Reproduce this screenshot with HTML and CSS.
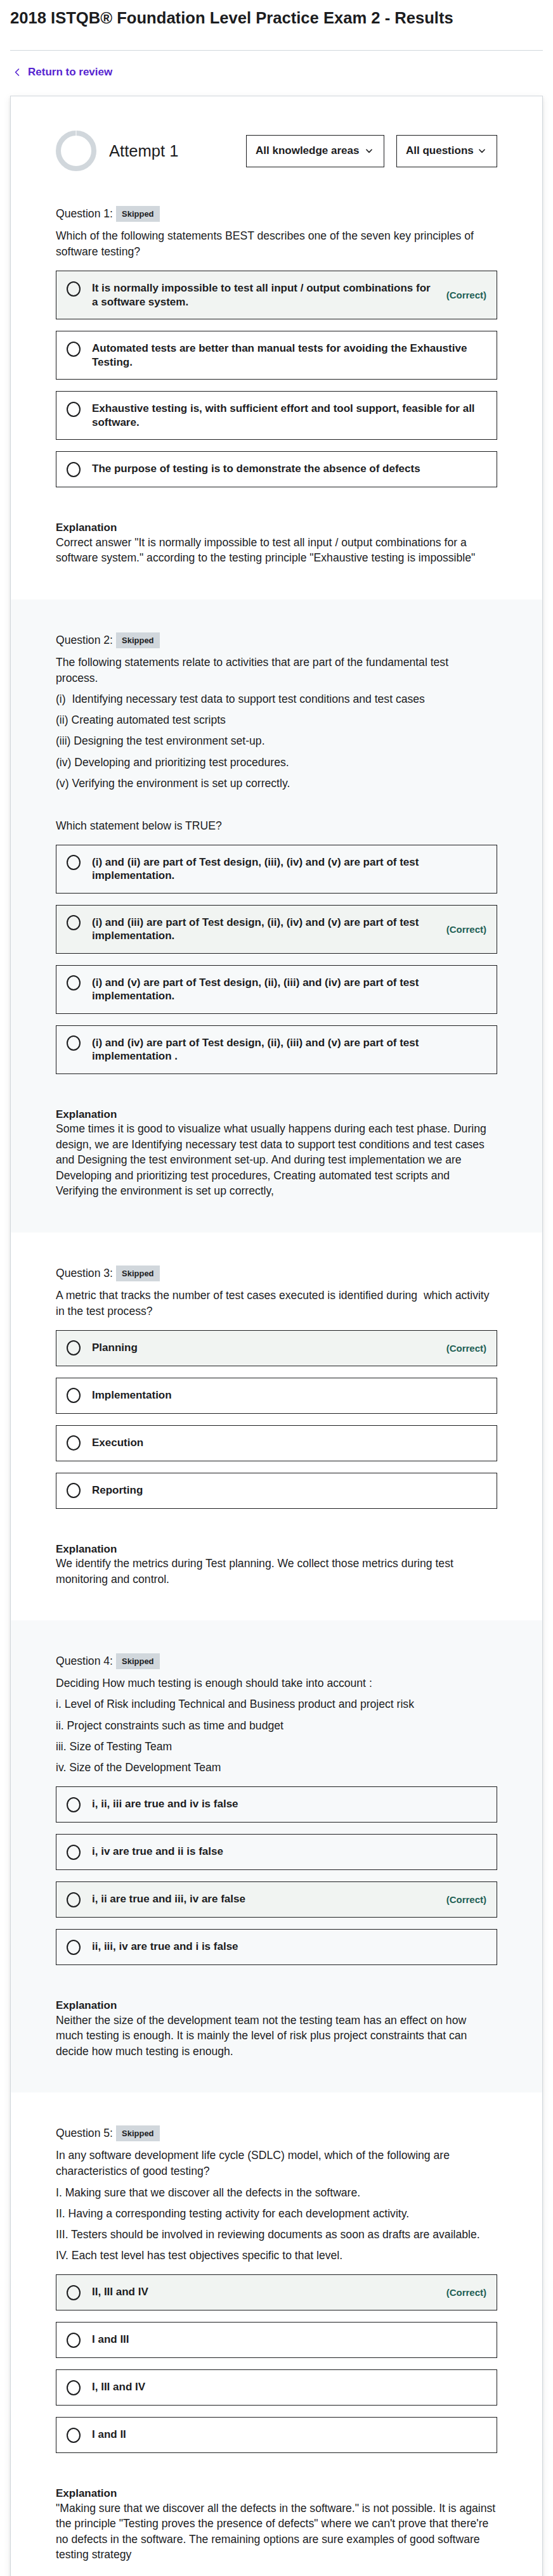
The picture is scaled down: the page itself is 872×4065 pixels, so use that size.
FILE: index.html
```html
<!DOCTYPE html>
<html lang="en">
<head>
<meta charset="utf-8">
<title>2018 ISTQB® Foundation Level Practice Exam 2 - Results</title>
<link rel="stylesheet" href="styles.css">
</head>
<body>
<div class="page">
  <h1 class="title">2018 ISTQB® Foundation Level Practice Exam 2 - Results</h1>
  <hr class="rule">
  <a class="back" href="#">
    <svg class="back-icon" width="10" height="12" viewBox="0 0 10 12"><path d="M7.5 1 L2.5 6 L7.5 11" fill="none" stroke="#5624d0" stroke-width="1.6" stroke-linecap="round" stroke-linejoin="round"/></svg>
    <span>Return to review</span>
  </a>

  <div class="card">
    <div class="attempt">
      <svg class="donut" width="64" height="64" viewBox="0 0 64 64">
        <circle cx="32" cy="32" r="28" fill="none" stroke="#d1d7dc" stroke-width="8"/>
        <rect x="31" y="0" width="2" height="8" fill="#e8ebee"/>
      </svg>
      <div class="attempt-label">Attempt 1</div>
      <div class="filters">
        <button class="filter filter-wide" type="button"><span>All knowledge areas</span><svg class="chev" width="10" height="7" viewBox="0 0 10 7"><path d="M1 1.2 L5 5.4 L9 1.2" fill="none" stroke="#1c1d1f" stroke-width="1.6" stroke-linecap="round" stroke-linejoin="round"/></svg></button>
        <button class="filter filter-narrow" type="button"><span>All questions</span><svg class="chev" width="10" height="7" viewBox="0 0 10 7"><path d="M1 1.2 L5 5.4 L9 1.2" fill="none" stroke="#1c1d1f" stroke-width="1.6" stroke-linecap="round" stroke-linejoin="round"/></svg></button>
      </div>
    </div>

    <!-- Question 1 -->
    <section class="q">
      <div class="q-label">Question 1:<span class="badge">Skipped</span></div>
      <div class="q-text">
        <p>Which of the following statements BEST describes one of the seven key principles of software testing?</p>
      </div>
      <div class="options">
        <div class="option correct"><span class="radio"></span><span class="opt-text">It is normally impossible to test all input / output combinations for a software system.</span><span class="tag">(Correct)</span></div>
        <div class="option"><span class="radio"></span><span class="opt-text">Automated tests are better than manual tests for avoiding the Exhaustive Testing.</span></div>
        <div class="option"><span class="radio"></span><span class="opt-text">Exhaustive testing is, with sufficient effort and tool support, feasible for all software.</span></div>
        <div class="option"><span class="radio"></span><span class="opt-text">The purpose of testing is to demonstrate the absence of defects</span></div>
      </div>
      <div class="expl">
        <h3 class="expl-title">Explanation</h3>
        <p class="expl-text">Correct answer "It is normally impossible to test all input / output combinations for a software system." according to the testing principle "Exhaustive testing is impossible"</p>
      </div>
    </section>

    <!-- Question 2 -->
    <section class="q alt">
      <div class="q-label">Question 2:<span class="badge">Skipped</span></div>
      <div class="q-text">
        <p>The following statements relate to activities that are part of the fundamental test<br>process.</p>
        <p>(i)&nbsp; Identifying necessary test data to support test conditions and test cases</p>
        <p>(ii) Creating automated test scripts</p>
        <p>(iii) Designing the test environment set-up.</p>
        <p>(iv) Developing and prioritizing test procedures.</p>
        <p>(v) Verifying the environment is set up correctly.</p>
        <p><br></p>
        <p>Which statement below is TRUE?</p>
      </div>
      <div class="options">
        <div class="option"><span class="radio"></span><span class="opt-text">(i) and (ii) are part of Test design, (iii), (iv) and (v) are part of test implementation.</span></div>
        <div class="option correct"><span class="radio"></span><span class="opt-text">(i) and (iii) are part of Test design, (ii), (iv) and (v) are part of test implementation.</span><span class="tag">(Correct)</span></div>
        <div class="option"><span class="radio"></span><span class="opt-text">(i) and (v) are part of Test design, (ii), (iii) and (iv) are part of test implementation.</span></div>
        <div class="option"><span class="radio"></span><span class="opt-text">(i) and (iv) are part of Test design, (ii), (iii) and (v) are part of test implementation .</span></div>
      </div>
      <div class="expl">
        <h3 class="expl-title">Explanation</h3>
        <p class="expl-text">Some times it is good to visualize what usually happens during each test phase. During design, we are Identifying necessary test data to support test conditions and test cases and Designing the test environment set-up. And during test implementation we are Developing and prioritizing test procedures, Creating automated test scripts and<br>Verifying the environment is set up correctly,</p>
      </div>
    </section>

    <!-- Question 3 -->
    <section class="q">
      <div class="q-label">Question 3:<span class="badge">Skipped</span></div>
      <div class="q-text">
        <p>A metric that tracks the number of test cases executed is identified during&nbsp; which activity in the test process?</p>
      </div>
      <div class="options">
        <div class="option correct"><span class="radio"></span><span class="opt-text">Planning</span><span class="tag">(Correct)</span></div>
        <div class="option"><span class="radio"></span><span class="opt-text">Implementation</span></div>
        <div class="option"><span class="radio"></span><span class="opt-text">Execution</span></div>
        <div class="option"><span class="radio"></span><span class="opt-text">Reporting</span></div>
      </div>
      <div class="expl">
        <h3 class="expl-title">Explanation</h3>
        <p class="expl-text">We identify the metrics during Test planning. We collect those metrics during test monitoring and control.</p>
      </div>
    </section>

    <!-- Question 4 -->
    <section class="q alt">
      <div class="q-label">Question 4:<span class="badge">Skipped</span></div>
      <div class="q-text">
        <p>Deciding How much testing is enough should take into account :</p>
        <p>i. Level of Risk including Technical and Business product and project risk</p>
        <p>ii. Project constraints such as time and budget</p>
        <p>iii. Size of Testing Team</p>
        <p>iv. Size of the Development Team</p>
      </div>
      <div class="options">
        <div class="option"><span class="radio"></span><span class="opt-text">i, ii, iii are true and iv is false</span></div>
        <div class="option"><span class="radio"></span><span class="opt-text">i, iv are true and ii is false</span></div>
        <div class="option correct"><span class="radio"></span><span class="opt-text">i, ii are true and iii, iv are false</span><span class="tag">(Correct)</span></div>
        <div class="option"><span class="radio"></span><span class="opt-text">ii, iii, iv are true and i is false</span></div>
      </div>
      <div class="expl">
        <h3 class="expl-title">Explanation</h3>
        <p class="expl-text">Neither the size of the development team not the testing team has an effect on how much&nbsp;testing is enough. It is mainly the level of risk plus project constraints that can decide how much testing is enough.</p>
      </div>
    </section>

    <!-- Question 5 -->
    <section class="q">
      <div class="q-label">Question 5:<span class="badge">Skipped</span></div>
      <div class="q-text">
        <p>In any software development life cycle (SDLC) model, which of the following are characteristics of good testing?</p>
        <p>I. Making sure that we discover all the defects in the software.</p>
        <p>II. Having a corresponding testing activity for each development activity.</p>
        <p>III. Testers should be involved in reviewing documents as soon as drafts are available.</p>
        <p>IV. Each test level has test objectives specific to that level.</p>
      </div>
      <div class="options">
        <div class="option correct"><span class="radio"></span><span class="opt-text">II, III and IV</span><span class="tag">(Correct)</span></div>
        <div class="option"><span class="radio"></span><span class="opt-text">I and III</span></div>
        <div class="option"><span class="radio"></span><span class="opt-text">I, III and IV</span></div>
        <div class="option"><span class="radio"></span><span class="opt-text">I and II</span></div>
      </div>
      <div class="expl">
        <h3 class="expl-title">Explanation</h3>
        <p class="expl-text">"Making sure that we discover all the defects in the software." is not possible. It is against the principle "Testing proves the presence of defects" where we can't prove that there're no defects in the software. The remaining options are sure examples of good software testing strategy</p>
      </div>
    </section>
  </div>
</div>
</body>
</html>
```
FILE: styles.css
```css
* {
  box-sizing: border-box;
}

html, body {
  margin: 0;
  padding: 0;
  background: #ffffff;
}

body {
  font-family: "Liberation Sans", Arial, Helvetica, sans-serif;
  color: #1c1d1f;
}

.page {
  padding: 0 16px;
}

.title {
  margin: 12px 0 0;
  font-size: 25.6px;
  line-height: 32px;
  font-weight: 700;
  color: #1c1d1f;
}

.rule {
  margin: 35px 0 0;
  border: 0;
  border-top: 1px solid #d1d7dc;
  height: 0;
}

.back {
  display: flex;
  align-items: center;
  margin-top: 22px;
  padding-left: 6px;
  height: 24px;
  font-size: 17px;
  font-weight: 700;
  line-height: 24px;
  color: #5624d0;
  text-decoration: none;
}

.back-icon {
  flex: none;
  margin-right: 12px;
}

.card {
  margin-top: 25px;
  border: 1px solid #d1d7dc;
  background: #ffffff;
  box-shadow: 0 2px 4px rgba(0, 0, 0, 0.08), 0 4px 12px rgba(0, 0, 0, 0.08);
}

.attempt {
  display: flex;
  align-items: center;
  padding: 54px 71px 3px;
}

.donut {
  flex: none;
  display: block;
}

.attempt-label {
  margin-left: 20px;
  font-size: 25.6px;
  line-height: 32px;
  font-weight: 400;
}

.filters {
  margin-left: auto;
  display: flex;
  gap: 19px;
}

.filter {
  display: flex;
  align-items: center;
  height: 51px;
  padding: 0 18px 0 14px;
  border: 1px solid #1c1d1f;
  background: transparent;
  font-family: "Liberation Sans", Arial, Helvetica, sans-serif;
  font-size: 17px;
  font-weight: 700;
  color: #1c1d1f;
  white-space: nowrap;
}

.filter-wide {
  width: 218px;
}

.filter-narrow {
  width: 159px;
}

.chev {
  flex: none;
  margin-left: auto;
}

.q {
  padding: 52px 71px 53px;
}

.q.alt {
  background: #f7f9fa;
}

.q-label {
  display: flex;
  align-items: center;
  height: 25px;
  font-size: 17.6px;
  line-height: 25px;
}

.badge {
  margin-left: 5px;
  height: 25px;
  padding: 0 9px;
  background: #d1d7dc;
  font-size: 13px;
  font-weight: 700;
  line-height: 25px;
  color: #1c1d1f;
}

.q-text {
  margin-top: 10px;
  font-size: 17.6px;
  line-height: 25px;
}

.q-text p {
  margin: 0;
}

.q-text p + p {
  margin-top: 8.3px;
}

.options {
  margin-top: 17px;
  display: flex;
  flex-direction: column;
  gap: 18px;
}

.option {
  display: flex;
  align-items: flex-start;
  padding: 16px;
  border: 1px solid #1c1d1f;
}

.option.correct {
  background: #f1f4f2;
}

.radio {
  flex: none;
  width: 22px;
  height: 23px;
  margin-right: 18px;
  display: flex;
  align-items: center;
  justify-content: center;
}

.radio::before {
  content: "";
  width: 20px;
  height: 20px;
  border: 2px solid #1c1d1f;
  border-radius: 50%;
}

.opt-text {
  flex: 1;
  font-size: 17px;
  font-weight: 700;
  line-height: 21.5px;
}

.tag {
  flex: none;
  align-self: center;
  margin-left: 16px;
  font-size: 15px;
  font-weight: 700;
  color: #1e6055;
}

.expl {
  margin-top: 53px;
}

.expl-title {
  margin: 0;
  font-size: 17px;
  font-weight: 700;
  line-height: 21.5px;
}

.expl-text {
  margin: 0;
  font-size: 17.6px;
  line-height: 24.5px;
}
```
